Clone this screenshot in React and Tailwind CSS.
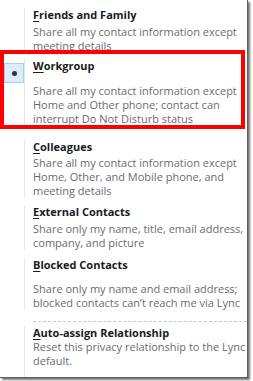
import React from "react";

const font = { fontFamily: '"Open Sans", "Noto Sans", sans-serif' };

function Title({ first, rest }) {
  return (
    <div className="text-[11px] leading-[14px] font-bold text-[#1b1b1b]">
      <span className="underline underline-offset-[2px]">{first}</span>
      {rest}
    </div>
  );
}

function Desc({ lines, className = "" }) {
  return (
    <div className={"text-[11px] leading-[14px] text-[#6d6a72] " + className}>
      {lines.map((l, i) => (
        <div key={i}>{l}</div>
      ))}
    </div>
  );
}

function Row({ children, gutter, className = "" }) {
  return (
    <div className={"flex " + className}>
      <div className="w-[25px] shrink-0 border-r border-[#e6e6e6] relative">{gutter}</div>
      <div className="flex-1 pl-[8px]">{children}</div>
    </div>
  );
}

export default function App() {
  return (
    <div className="relative w-[253px] h-[381px] bg-white overflow-hidden" style={font}>
      <div className="w-[248px] h-[378px] bg-white border-r border-b border-[#5f5f5f] shadow-[2px_2px_2px_rgba(0,0,0,0.55)] flex flex-col">
        <Row className="pt-[8px]">
          <Title first="F" rest="riends and Family" />
          <Desc className="mt-[3px]" lines={["Share all my contact information except", "meeting details"]} />
        </Row>
        <Row
          className="pt-[6px]"
          gutter={
            <div className="absolute left-[4px] top-[4px] w-[20px] h-[20px] bg-[#dcecf8] border border-[#9fd2ec] flex items-center justify-center">
              <div className="w-[5px] h-[5px] rounded-full bg-[#253250]" />
            </div>
          }
        >
          <Title first="W" rest="orkgroup" />
          <Desc
            className="mt-[11px]"
            lines={[
              "Share all my contact information except",
              "Home and Other phone; contact can",
              "interrupt Do Not Disturb status",
            ]}
          />
        </Row>
        <Row className="pt-[14px]">
          <Title first="C" rest="olleagues" />
          <Desc
            className="mt-[2px]"
            lines={[
              "Share all my contact information except",
              "Home, Other, and Mobile phone, and",
              "meeting details",
            ]}
          />
        </Row>
        <Row className="pt-[7px]">
          <Title first="E" rest="xternal Contacts" />
          <Desc
            className="mt-[3px]"
            lines={["Share only my name, title, email address,", "company, and picture"]}
          />
        </Row>
        <Row className="pt-[8px]">
          <Title first="B" rest="locked Contacts" />
          <Desc
            className="mt-[10px]"
            lines={["Share only my name and email address;", "blocked contacts can\u2019t reach me via Lync"]}
          />
        </Row>
        <Row className="pt-[11px] pb-[4px]">
          <div className="border-t border-dashed border-[#c8c8c8]" />
        </Row>
        <Row className="flex-1">
          <Title first="A" rest="uto-assign Relationship" />
          <Desc lines={["Reset this privacy relationship to the Lync", "default."]} />
        </Row>
      </div>
      <div className="absolute left-0 top-[50px] w-[245px] h-[79px] border-[4px] border-[#ff0000]" />
    </div>
  );
}
